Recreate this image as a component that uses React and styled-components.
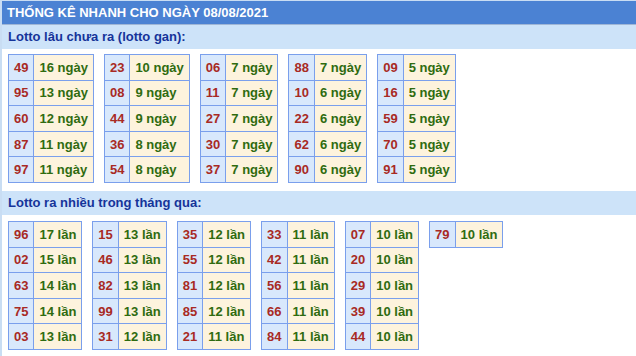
import React from 'react';
import styled, { createGlobalStyle } from 'styled-components';

const GlobalStyle = createGlobalStyle`
  body {
    margin: 0;
    background: #fff;
    font-family: "Liberation Sans", Arial, sans-serif;
  }
`;

const gan = [
  [['49', 16], ['95', 13], ['60', 12], ['87', 11], ['97', 11]],
  [['23', 10], ['08', 9], ['44', 9], ['36', 8], ['54', 8]],
  [['06', 7], ['11', 7], ['27', 7], ['30', 7], ['37', 7]],
  [['88', 7], ['10', 6], ['22', 6], ['62', 6], ['90', 6]],
  [['09', 5], ['16', 5], ['59', 5], ['70', 5], ['91', 5]],
];

const nhieu = [
  [['96', 17], ['02', 15], ['63', 14], ['75', 14], ['03', 13]],
  [['15', 13], ['46', 13], ['82', 13], ['99', 13], ['31', 12]],
  [['35', 12], ['55', 12], ['81', 12], ['85', 12], ['21', 11]],
  [['33', 11], ['42', 11], ['56', 11], ['66', 11], ['84', 11]],
  [['07', 10], ['20', 10], ['29', 10], ['39', 10], ['44', 10]],
  [['79', 10]],
];

const Panel = styled.div`
  border-left: 2px solid #c9ddf3;
  border-top: 1px solid #c9ddf3;
  min-height: 355px;
`;

const Title = styled.div`
  height: 23px;
  line-height: 23px;
  padding-left: 5px;
  background: #4b82d3;
  border-bottom: 1px solid #9fb6d6;
  color: #fff;
  font-size: 13px;
  font-weight: bold;
`;

const SubTitle = styled.div`
  height: 24px;
  line-height: 24px;
  padding-left: 6px;
  background: #cde3f9;
  color: #15349a;
  font-size: 13px;
  font-weight: bold;
`;

const Tables = styled.div`
  display: flex;
  align-items: flex-start;
  gap: 10px;
  padding: ${(p) => p.$pad};
`;

const Table = styled.table`
  border-collapse: collapse;
  border: 1px solid #7a9fec;
  font-size: 13px;
  font-weight: bold;
`;

const Cell = styled.td`
  height: 24.6px;
  padding: 0 5px;
  border: 1px solid #7a9fec;
  white-space: nowrap;
  background: ${(p) => (p.$num ? '#d8e8fc' : '#fdf3dd')};
  color: ${(p) => (p.$num ? '#a82a24' : '#2f6b10')};
`;

const StatTable = ({ rows, unit }) => (
  <Table>
    <tbody>
      {rows.map(([num, count]) => (
        <tr key={num}>
          <Cell $num>{num}</Cell>
          <Cell>
            {count} {unit}
          </Cell>
        </tr>
      ))}
    </tbody>
  </Table>
);

const App = () => (
  <Panel>
    <GlobalStyle />
    <Title>THỐNG KÊ NHANH CHO NGÀY 08/08/2021</Title>
    <SubTitle>Lotto lâu chưa ra (lotto gan):</SubTitle>
    <Tables $pad="5px 6px 8px">
      {gan.map((rows, i) => (
        <StatTable key={i} rows={rows} unit="ngày" />
      ))}
    </Tables>
    <SubTitle>Lotto ra nhiều trong tháng qua:</SubTitle>
    <Tables $pad="6px 6px 6px">
      {nhieu.map((rows, i) => (
        <StatTable key={i} rows={rows} unit="lần" />
      ))}
    </Tables>
  </Panel>
);

export default App;
